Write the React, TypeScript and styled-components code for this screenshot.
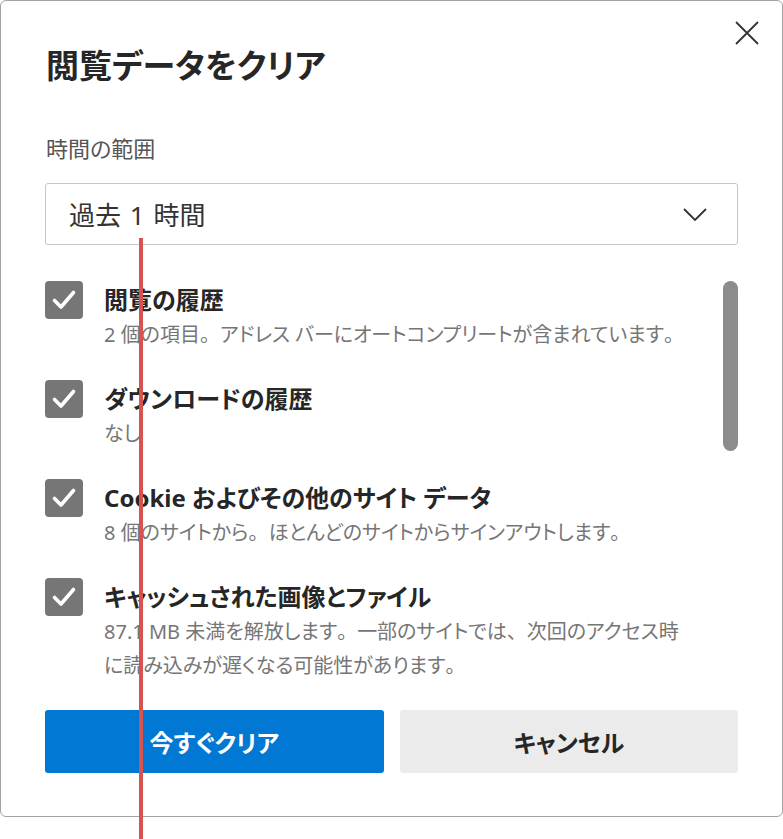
import React from 'react';
import styled, {createGlobalStyle} from 'styled-components';

const GlobalStyle = createGlobalStyle`
  html, body {
    margin: 0;
    padding: 0;
    background: #ffffff;
  }
  body {
    font-family: "Noto Sans", "Noto Sans CJK JP", sans-serif;
    font-feature-settings: "palt";
    color: #262626;
  }
`;

const Page = styled.div`
  position: relative;
  width: 783px;
  height: 839px;
  overflow: hidden;
`;

const Dialog = styled.div`
  box-sizing: border-box;
  width: 783px;
  height: 817px;
  border: 1px solid #a3a3a3;
  border-radius: 6px;
  padding: 20px 44px 0 44px;
  display: flex;
  flex-direction: column;
`;

const Header = styled.div`
  display: flex;
  justify-content: space-between;
  align-items: flex-start;
  margin-right: -21px;
`;

const Title = styled.h1`
  margin: 23px 0 0 1px;
  font-size: 33px;
  line-height: 44px;
  font-weight: 700;
  color: #262626;
`;

const CloseButton = styled.button`
  border: 0;
  background: none;
  padding: 0;
  width: 24px;
  height: 24px;
  display: flex;
  align-items: center;
  justify-content: center;
  color: #333;
`;

const FieldLabel = styled.div`
  margin: 45px 0 0 1px;
  font-size: 22px;
  line-height: 30px;
  color: #555555;
`;

const Select = styled.div`
  box-sizing: border-box;
  margin-top: 20px;
  height: 62px;
  border: 1px solid #c6c6c6;
  border-radius: 3px;
  display: flex;
  align-items: center;
  justify-content: space-between;
  padding: 0 30px 0 23px;
  font-size: 26px;
  word-spacing: 2px;
  color: #333333;
`;

const ListArea = styled.div`
  margin-top: 37px;
  display: flex;
  gap: 8px;
  height: 405px;
`;

const Items = styled.div`
  flex: 1;
  display: flex;
  flex-direction: column;
  gap: 29px;
`;

const Row = styled.div`
  display: flex;
  gap: 21px;
  align-items: flex-start;
`;

const CheckBox = styled.div`
  flex: none;
  width: 38px;
  height: 38px;
  margin-top: -1px;
  border-radius: 4px;
  background: #767676;
  display: flex;
  align-items: center;
  justify-content: center;
`;

const RowText = styled.div`
  display: flex;
  flex-direction: column;
`;

const RowTitle = styled.div`
  font-size: 24px;
  line-height: 36px;
  font-weight: 700;
  color: #262626;
`;

const DescLine = styled.div`
  font-size: 20px;
  line-height: 34px;
  color: #767676;
  white-space: nowrap;
`;

// full-width punctuation keeps its full advance, as in the original
const Punct = styled.span`
  font-feature-settings: normal;
`;

const ScrollTrack = styled.div`
  flex: none;
  width: 15px;
`;

const ScrollThumb = styled.div`
  width: 15px;
  height: 170px;
  margin-top: -1px;
  border-radius: 8px;
  background: #8c8c8c;
`;

const Buttons = styled.div`
  margin-top: 23px;
  display: grid;
  grid-template-columns: 1fr 1fr;
  gap: 16px;
`;

const ActionButton = styled.button<{$primary?: boolean}>`
  height: 63px;
  border: 0;
  border-radius: 3px;
  font-family: inherit;
  font-feature-settings: "palt";
  font-size: 24px;
  font-weight: 700;
  background: ${p => p.$primary ? '#0078d4' : '#ebebeb'};
  color: ${p => p.$primary ? '#ffffff' : '#262626'};
`;

const Marker = styled.div`
  position: absolute;
  left: 139px;
  top: 238px;
  width: 4px;
  height: 601px;
  background: #d7534f;
`;

const items = [
  {title: '閲覧の履歴', desc: ['2 個の項目。アドレス バーにオートコンプリートが含まれています。']},
  {title: 'ダウンロードの履歴', desc: ['なし']},
  {title: 'Cookie およびその他のサイト データ', desc: ['8 個のサイトから。ほとんどのサイトからサインアウトします。']},
  {
    title: 'キャッシュされた画像とファイル',
    desc: ['87.1 MB 未満を解放します。一部のサイトでは、次回のアクセス時', 'に読み込みが遅くなる可能性があります。']
  }
];

const withPunct = (text: string) => text.split(/([。、])/).map((part, i) =>
  part === '。' || part === '、' ? <Punct key={i}>{part}</Punct> : part);

const Check = () => <svg width="38" height="38" viewBox="0 0 38 38">
  <path d="M9.5 19.5 L16 26 L28.5 11.5" fill="none" stroke="#fff" strokeWidth="3.6"
        strokeLinecap="round" strokeLinejoin="round"/>
</svg>;

export default function App() {
  return <Page>
    <GlobalStyle/>
    <Dialog>
      <Header>
        <Title>閲覧データをクリア</Title>
        <CloseButton aria-label="閉じる">
          <svg width="24" height="24" viewBox="0 0 24 24">
            <path d="M1 1 L23 23 M23 1 L1 23" stroke="#333" strokeWidth="1.8" fill="none"/>
          </svg>
        </CloseButton>
      </Header>
      <FieldLabel>時間の範囲</FieldLabel>
      <Select>
        <span>過去 1 時間</span>
        <svg width="24" height="13" viewBox="0 0 24 13">
          <path d="M1 1 L12 12 L23 1" stroke="#333" strokeWidth="1.8" fill="none"/>
        </svg>
      </Select>
      <ListArea>
        <Items>
          {items.map(item => <Row key={item.title}>
            <CheckBox><Check/></CheckBox>
            <RowText>
              <RowTitle>{item.title}</RowTitle>
              {item.desc.map(line => <DescLine key={line}>{withPunct(line)}</DescLine>)}
            </RowText>
          </Row>)}
        </Items>
        <ScrollTrack><ScrollThumb/></ScrollTrack>
      </ListArea>
      <Buttons>
        <ActionButton $primary>今すぐクリア</ActionButton>
        <ActionButton>キャンセル</ActionButton>
      </Buttons>
    </Dialog>
    <Marker/>
  </Page>;
}
